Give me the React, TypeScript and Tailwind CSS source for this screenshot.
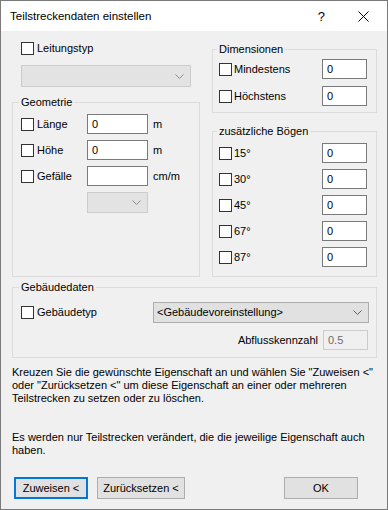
import React from 'react';

function Check() {
  return <span className="block w-[13px] h-[13px] shrink-0 border border-[#333333] bg-white" />;
}

function Chevron({ color }: { color: string }) {
  return (
    <svg width="9" height="5" viewBox="0 0 9 5" className="shrink-0">
      <polyline points="0.5,0.5 4.5,4.5 8.5,0.5" fill="none" stroke={color} strokeWidth="1" />
    </svg>
  );
}

function Group({ label, className, children }: { label: string; className: string; children?: React.ReactNode }) {
  return (
    <div className={'border border-[#dcdcdc] ' + className}>
      <span className="block w-fit -mt-[8px] px-[2px] leading-[14px] bg-[#f0f0f0]">{label}</span>
      {children}
    </div>
  );
}

function Field({ value, w = 'w-[45px]' }: { value: string; w?: string }) {
  return (
    <div className={w + ' h-[20px] shrink-0 border border-[#7a7a7a] bg-white flex items-center pl-[4px]'}>
      {value}
    </div>
  );
}

const bends = ['15°', '30°', '45°', '67°', '87°'];

export default function App() {
  return (
    <div className="w-[388px] h-[510px] border border-[#7a7a7a] bg-[#f0f0f0] flex flex-col text-[11px] text-black font-['Liberation_Sans',Arial,sans-serif] leading-[13px]">
      {/* title bar */}
      <div className="h-[30px] shrink-0 bg-white flex items-center pl-[9px]">
        <span className="text-[11.5px]">Teilstreckendaten einstellen</span>
        <span className="ml-auto mr-[33px] text-[13px]">?</span>
        <svg width="11" height="11" viewBox="0 0 11 11" className="mr-[18px]">
          <path d="M0.5 0.5 L10.5 10.5 M10.5 0.5 L0.5 10.5" stroke="#000" strokeWidth="1" />
        </svg>
      </div>

      <div className="pl-[11px] pr-[10px] flex flex-col">
        <div className="flex gap-[12px]">
          {/* left column */}
          <div className="w-[188px] flex flex-col">
            <div className="mt-[11px] h-[13px] pl-[9px] flex items-center">
              <Check />
              <span className="ml-[3px]">Leitungstyp</span>
            </div>
            <div className="mt-[10px] ml-[9px] w-[170px] h-[22px] border border-[#cccccc] bg-[#e3e3e3] flex items-center justify-end pr-[6px]">
              <Chevron color="#8a8a8a" />
            </div>
            <Group label="Geometrie" className="mt-[15px] h-[175px] pl-[6px]">
              <div className="pl-[2px] flex flex-col gap-[6px] mt-[5px]">
                {[
                  ['Länge', '0', 'm'],
                  ['Höhe', '0', 'm'],
                  ['Gefälle', '', 'cm/m'],
                ].map(([l, v, u]) => (
                  <div key={l} className="h-[20px] flex items-center">
                    <div className="w-[66px] flex items-center">
                      <Check />
                      <span className="ml-[3px]">{l}</span>
                    </div>
                    <Field value={v} w="w-[61px]" />
                    <span className="ml-[5px]">{u}</span>
                  </div>
                ))}
                <div className="ml-[66px] w-[61px] h-[21px] border border-[#cccccc] bg-[#e3e3e3] flex items-center justify-end pr-[6px]">
                  <Chevron color="#8a8a8a" />
                </div>
              </div>
            </Group>
          </div>

          {/* right column */}
          <div className="w-[165px] flex flex-col">
            <Group label="Dimensionen" className="mt-[18px] h-[64px] pl-[4px]">
              <div className="pl-[2px] flex flex-col gap-[7px] mt-[3px]">
                {['Mindestens', 'Höchstens'].map((l) => (
                  <div key={l} className="h-[20px] flex items-center">
                    <div className="w-[103px] flex items-center">
                      <Check />
                      <span className="ml-[2px]">{l}</span>
                    </div>
                    <Field value="0" />
                  </div>
                ))}
              </div>
            </Group>
            <Group label="zusätzliche Bögen" className="mt-[18px] h-[146px] pl-[4px]">
              <div className="pl-[2px] flex flex-col gap-[6px] mt-[5px]">
                {bends.map((l) => (
                  <div key={l} className="h-[20px] flex items-center">
                    <div className="w-[103px] flex items-center">
                      <Check />
                      <span className="ml-[2px]">{l}</span>
                    </div>
                    <Field value="0" />
                  </div>
                ))}
              </div>
            </Group>
          </div>
        </div>

        <Group label="Gebäudedaten" className="mt-[10px] h-[71px] pl-[6px]">
          <div className="pl-[2px] mt-[8px] h-[21px] flex items-center">
            <div className="w-[132px] flex items-center">
              <Check />
              <span className="ml-[3px]">Gebäudetyp</span>
            </div>
            <div className="w-[216px] h-[21px] border border-[#adadad] bg-[#e1e1e1] flex items-center pl-[3px] pr-[6px]">
              <span>&lt;Gebäudevoreinstellung&gt;</span>
              <span className="ml-auto flex">
                <Chevron color="#606060" />
              </span>
            </div>
          </div>
          <div className="mt-[7px] pr-[8px] flex items-center justify-end">
            <span className="mr-[5px]">Abflusskennzahl</span>
            <div className="w-[45px] h-[20px] border border-[#cccccc] bg-[#f0f0f0] flex items-center pl-[4px] text-[#6d6d6d]">
              0.5
            </div>
          </div>
        </Group>

        <p className="mt-[8px] whitespace-nowrap">
          Kreuzen Sie die gewünschte Eigenschaft an und wählen Sie "Zuweisen &lt;"
          <br />
          oder "Zurücksetzen &lt;" um diese Eigenschaft an einer oder mehreren
          <br />
          Teilstrecken zu setzen oder zu löschen.
        </p>
        <p className="mt-[26px] whitespace-nowrap">
          Es werden nur Teilstrecken verändert, die die jeweilige Eigenschaft auch
          <br />
          haben.
        </p>

        <div className="mt-[20px] flex">
          <button className="ml-[2px] w-[74px] h-[22px] border-2 border-[#0078d7] bg-[#e1e1e1]">Zuweisen &lt;</button>
          <button className="ml-[9px] w-[88px] h-[22px] border border-[#adadad] bg-[#e1e1e1]">Zurücksetzen &lt;</button>
          <button className="ml-auto mr-[19px] w-[74px] h-[22px] border border-[#adadad] bg-[#e1e1e1]">OK</button>
        </div>
      </div>
    </div>
  );
}
